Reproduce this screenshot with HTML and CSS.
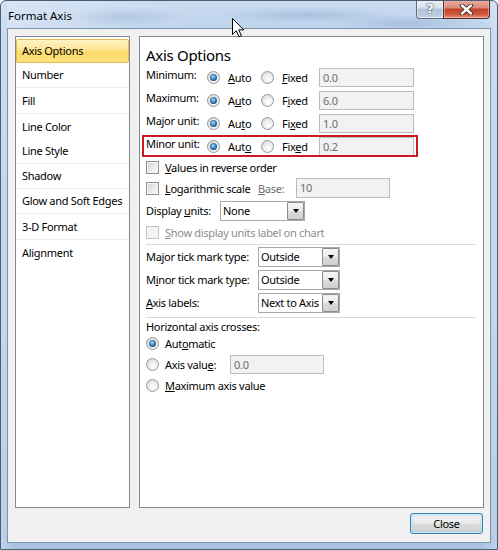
FILE: index.html
```html
<!DOCTYPE html>
<html lang="en">
<head>
<meta charset="utf-8">
<title>Format Axis</title>
<link rel="stylesheet" href="styles.css">
</head>
<body>
<div class="window">
  <div class="titlebar">
    <span class="title">Format Axis</span>
    <div class="caption">
      <div class="cap-help">?</div>
      <div class="cap-close">
        <svg width="15" height="11" viewBox="0 0 15 11">
          <path d="M3 1.5 L12 9.5 M12 1.5 L3 9.5" stroke="#3a2420" stroke-width="4.2" stroke-linecap="round"/>
          <path d="M3 1.5 L12 9.5 M12 1.5 L3 9.5" stroke="#ffffff" stroke-width="2.4" stroke-linecap="round"/>
        </svg>
      </div>
    </div>
  </div>
  <div class="client">
    <div class="panes">
      <ul class="nav">
        <li class="nav-item selected">Axis Options</li>
        <li class="nav-item sep">Number</li>
        <li class="nav-item sep tall">Fill</li>
        <li class="nav-item">Line Color</li>
        <li class="nav-item sep">Line Style</li>
        <li class="nav-item sep">Shadow</li>
        <li class="nav-item sep">Glow and Soft Edges</li>
        <li class="nav-item sep tall">3-D Format</li>
        <li class="nav-item">Alignment</li>
      </ul>
      <div class="content">
        <h1 class="heading">Axis Options</h1>
        <div class="brow">
          <span class="lbl">Minimum:</span>
          <span class="opt"><span class="radio on"></span><span><u>A</u>uto</span></span>
          <span class="opt"><span class="radio"></span><span><u>F</u>ixed</span></span>
          <span class="field">0.0</span>
        </div>
        <div class="brow">
          <span class="lbl">Maximum:</span>
          <span class="opt"><span class="radio on"></span><span>A<u>u</u>to</span></span>
          <span class="opt"><span class="radio"></span><span>F<u>i</u>xed</span></span>
          <span class="field">6.0</span>
        </div>
        <div class="brow">
          <span class="lbl">Major unit:</span>
          <span class="opt"><span class="radio on"></span><span>Au<u>t</u>o</span></span>
          <span class="opt"><span class="radio"></span><span>Fi<u>x</u>ed</span></span>
          <span class="field">1.0</span>
        </div>
        <div class="brow hl">
          <span class="lbl">Minor unit:</span>
          <span class="opt"><span class="radio on"></span><span>Aut<u>o</u></span></span>
          <span class="opt"><span class="radio"></span><span>Fix<u>e</u>d</span></span>
          <span class="field">0.2</span>
        </div>
        <div class="crow r-values">
          <span class="check"></span><span><u>V</u>alues in reverse order</span>
        </div>
        <div class="crow r-log">
          <span class="check"></span><span class="log-text"><u>L</u>ogarithmic scale</span>
          <span class="base"><u>B</u>ase:</span>
          <span class="field base-field">10</span>
        </div>
        <div class="crow r-units">
          <span class="units-lbl">Display <u>u</u>nits:</span>
          <span class="combo units-combo"><span class="combo-text">None</span><span class="combo-btn"></span></span>
        </div>
        <div class="crow r-show disabled">
          <span class="check"></span><span><u>S</u>how display units label on chart</span>
        </div>
        <div class="sep-line"></div>
        <div class="trow">
          <span>Ma<u>j</u>or tick mark type:</span>
          <span class="combo tick-combo"><span class="combo-text">Outside</span><span class="combo-btn"></span></span>
        </div>
        <div class="trow">
          <span>M<u>i</u>nor tick mark type:</span>
          <span class="combo tick-combo"><span class="combo-text">Outside</span><span class="combo-btn"></span></span>
        </div>
        <div class="trow">
          <span><u>A</u>xis labels:</span>
          <span class="combo tick-combo"><span class="combo-text">Next to Axis</span><span class="combo-btn"></span></span>
        </div>
        <div class="sep-line sep-2"></div>
        <div class="hrow h-label">Horizontal axis crosses:</div>
        <div class="hrow h-auto"><span class="radio on"></span><span>Aut<u>o</u>matic</span></div>
        <div class="hrow h-value"><span class="radio"></span><span class="value-text">Axis valu<u>e</u>:</span><span class="field value-field">0.0</span></div>
        <div class="hrow h-max"><span class="radio"></span><span><u>M</u>aximum axis value</span></div>
      </div>
    </div>
    <div class="footer">
      <button class="btn-close" type="button">Close</button>
    </div>
  </div>
  <svg class="cursor" width="13" height="20" viewBox="0 0 13 20">
    <path d="M0.5 0.5 L0.5 16.5 L4.3 12.8 L7 18.8 L9.4 17.8 L6.8 11.9 L11.8 11.9 Z" fill="#ffffff" stroke="#000000" stroke-width="1" stroke-linejoin="round"/>
  </svg>
</div>
</body>
</html>
```

FILE: styles.css
```css
html, body {
  margin: 0;
  padding: 0;
}

body {
  width: 498px;
  height: 550px;
  overflow: hidden;
  font-family: "Noto Sans", "Open Sans", sans-serif;
  font-size: 11px;
  letter-spacing: -0.3px;
  color: #000;
}

.window {
  position: relative;
  width: 498px;
  height: 550px;
  box-sizing: border-box;
  border: 1px solid #4a5d73;
  border-radius: 6px 6px 0 0;
  padding: 0 6px 6px;
  display: flex;
  flex-direction: column;
  overflow: hidden;
  background:
    linear-gradient(90deg, rgba(255,255,255,0.25), rgba(255,255,255,0) 3%, rgba(255,255,255,0) 97%, rgba(255,255,255,0.25)),
    linear-gradient(180deg, #c9dbf0 0%, #bcd2ec 6%, #b4cbe8 60%, #a9c2e2 100%);
}

/* ---------- title bar ---------- */
.titlebar {
  height: 27px;
  flex: none;
  display: flex;
  justify-content: space-between;
  align-items: flex-start;
  background:
    radial-gradient(ellipse 60px 10px at 120px 16px, rgba(150,175,210,0.45), rgba(150,175,210,0)),
    radial-gradient(ellipse 90px 8px at 300px 14px, rgba(120,150,195,0.35), rgba(120,150,195,0)),
    radial-gradient(ellipse 70px 8px at 400px 22px, rgba(120,150,195,0.35), rgba(120,150,195,0)),
    linear-gradient(90deg, rgba(225,235,247,0.6), rgba(225,235,247,0) 40%);
}

.title {
  padding-left: 1px;
  line-height: 29px;
  font-size: 11.5px;
  letter-spacing: 0;
  color: #000;
}

.caption {
  display: flex;
  margin-right: 1px;
  margin-top: -1px;
}

.cap-help {
  width: 27px;
  height: 19px;
  box-sizing: border-box;
  border: 1px solid #5a6b80;
  border-top: none;
  border-right: none;
  border-radius: 0 0 0 4px;
  background: linear-gradient(180deg, #e9eff7 0%, #d6e0ec 45%, #b3c3d7 52%, #c3d3e6 100%);
  box-shadow: inset 0 0 0 1px rgba(255,255,255,0.55);
  color: #fff;
  font-family: "DejaVu Sans", sans-serif;
  font-size: 13px;
  font-weight: bold;
  letter-spacing: 0;
  text-align: center;
  line-height: 18px;
  text-shadow: 0 0 1px #33465c, 0 0 2px #33465c;
}

.cap-close {
  width: 47px;
  height: 19px;
  box-sizing: border-box;
  border: 1px solid #4e2a24;
  border-top: none;
  border-radius: 0 0 4px 0;
  background: linear-gradient(180deg, #eab0a3 0%, #d9887a 42%, #c34328 52%, #cc5538 78%, #e69580 100%);
  box-shadow: inset 0 0 0 1px rgba(255,220,210,0.45);
  display: flex;
  align-items: center;
  justify-content: center;
}

.cap-close svg {
  display: block;
}

/* ---------- client area ---------- */
.client {
  flex: 1;
  display: flex;
  flex-direction: column;
  border: 1px solid #7f93aa;
  background: #f0f0f0;
  padding: 7px 6px 8px 7px;
  min-height: 0;
}

.panes {
  height: 472px;
  flex: none;
  display: flex;
  gap: 9px;
}

/* ---------- left navigation ---------- */
.nav {
  width: 115px;
  box-sizing: border-box;
  margin: 0;
  padding: 2px 0 0;
  list-style: none;
  background: #fff;
  border: 1px solid #828790;
  flex: none;
}

.nav-item {
  height: 25px;
  line-height: 25px;
  box-sizing: border-box;
  padding-left: 6px;
  white-space: nowrap;
}

.nav-item.tall {
  height: 26px;
  line-height: 26px;
}

.nav-item.sep {
  border-bottom: 1px solid #ededed;
  line-height: 24px;
}

.nav-item.sep.tall {
  line-height: 25px;
}

.nav-item.selected {
  height: 24px;
  line-height: 22px;
  padding-left: 5px;
  border: 1px solid #e2bd55;
  border-radius: 2px;
  background: linear-gradient(180deg, #fff3c4 0%, #fee79a 40%, #fcdc6c 55%, #fde27e 100%);
}

/* ---------- right content ---------- */
.content {
  flex: 1;
  box-sizing: border-box;
  background: #fff;
  border: 1px solid #828790;
  padding: 8px 7px 0 6px;
}

.heading {
  margin: 0 0 1px;
  font-size: 15px;
  font-weight: normal;
  line-height: 20px;
  letter-spacing: -0.3px;
}

.brow {
  display: grid;
  grid-template-columns: 61px 54px 58px 95px;
  width: 268px;
  height: 23px;
  align-items: center;
}

.brow .lbl {
  align-self: start;
  line-height: 18px;
}

.brow.hl {
  position: relative;
}

.brow.hl::after {
  content: "";
  position: absolute;
  left: -4px;
  right: -4px;
  top: 0;
  bottom: 1px;
  border: 2px solid #c91b22;
  pointer-events: none;
}

.opt {
  display: flex;
  align-items: center;
  gap: 8px;
}

.radio {
  width: 13px;
  height: 13px;
  box-sizing: border-box;
  flex: none;
  border-radius: 50%;
  border: 1px solid #979797;
  background: radial-gradient(circle at 60% 65%, #ffffff 0%, #f2f2f2 35%, #d0d0d0 100%);
  display: inline-flex;
  align-items: center;
  justify-content: center;
}

.radio.on::after {
  content: "";
  width: 7px;
  height: 7px;
  border-radius: 50%;
  background: radial-gradient(circle at 45% 40%, #b9e3fb 0%, #4e94cc 35%, #17508a 70%, #0e355f 100%);
}

.field {
  height: 19px;
  box-sizing: border-box;
  border: 1px solid #bcbcbc;
  background: #f2f2f2;
  color: #6d6d6d;
  padding-left: 3px;
  line-height: 17px;
}

.check {
  width: 13px;
  height: 13px;
  box-sizing: border-box;
  flex: none;
  border: 1px solid #8f8f8f;
  background: linear-gradient(135deg, #cfcfcf 0%, #e9e9e9 50%, #fbfbfb 100%);
  box-shadow: inset 0 0 0 1px #f6f6f6;
}

.crow {
  display: flex;
  align-items: center;
  gap: 6px;
}

.r-values { height: 19px; }
.r-log { height: 22px; }
.r-units { height: 23px; gap: 0; }
.r-show { height: 20px; }

.log-text {
  width: 87px;
}

.base {
  width: 32px;
  color: #6d6d6d;
}

.base-field {
  width: 94px;
  height: 20px;
  line-height: 18px;
}

.units-lbl {
  width: 74px;
}

.disabled {
  color: #8d8d8d;
}

.disabled .check {
  border-color: #c4c4c4;
  background: #f4f4f4;
  box-shadow: none;
}

.combo {
  display: flex;
  height: 20px;
  box-sizing: border-box;
  border: 1px solid #a3a9b1;
  background: #fff;
}

.combo-text {
  flex: 1;
  padding-left: 2px;
  line-height: 18px;
  white-space: nowrap;
  overflow: hidden;
}

.combo-btn {
  width: 17px;
  flex: none;
  box-sizing: border-box;
  border: 1px solid #8c8c8c;
  border-radius: 1px;
  background: linear-gradient(180deg, #f5f5f5 0%, #ebebeb 50%, #dcdcdc 51%, #cfcfcf 100%);
  display: flex;
  align-items: center;
  justify-content: center;
}

.combo-btn::after {
  content: "";
  width: 0;
  height: 0;
  border-left: 3.5px solid transparent;
  border-right: 3.5px solid transparent;
  border-top: 4px solid #000;
}

.units-combo { width: 85px; }
.tick-combo { width: 82px; }

.sep-line {
  margin-top: 2px;
  height: 1px;
  background: #d9d9d9;
}

.sep-2 {
  margin-top: 3px;
}

.trow {
  display: grid;
  grid-template-columns: 112px 82px;
  height: 23px;
  align-items: center;
}

.hrow {
  display: flex;
  align-items: center;
  gap: 6px;
}

.h-label { height: 17px; }
.h-auto { height: 17px; }
.h-value { height: 24px; }
.h-max { height: 19px; }

.value-text {
  width: 59px;
}

.value-field {
  width: 94px;
}

/* ---------- footer ---------- */
.footer {
  margin-top: 5px;
  display: flex;
  justify-content: flex-end;
}

.btn-close {
  width: 73px;
  height: 21px;
  margin: 0 1px 0 0;
  padding: 0;
  box-sizing: border-box;
  border: 1px solid #3c7fb1;
  border-radius: 3px;
  background: linear-gradient(180deg, #f2f2f2 0%, #ebebeb 48%, #dddddd 52%, #cfcfcf 100%);
  box-shadow: inset 0 0 0 1px #c6ebfa, inset 0 0 3px 1px rgba(120,200,240,0.55);
  font-family: "Noto Sans", "Open Sans", sans-serif;
  font-size: 11px;
  letter-spacing: -0.3px;
  color: #000;
  line-height: 19px;
}

/* mouse pointer overlay */
.cursor {
  position: absolute;
  left: 231px;
  top: 17px;
}
```
